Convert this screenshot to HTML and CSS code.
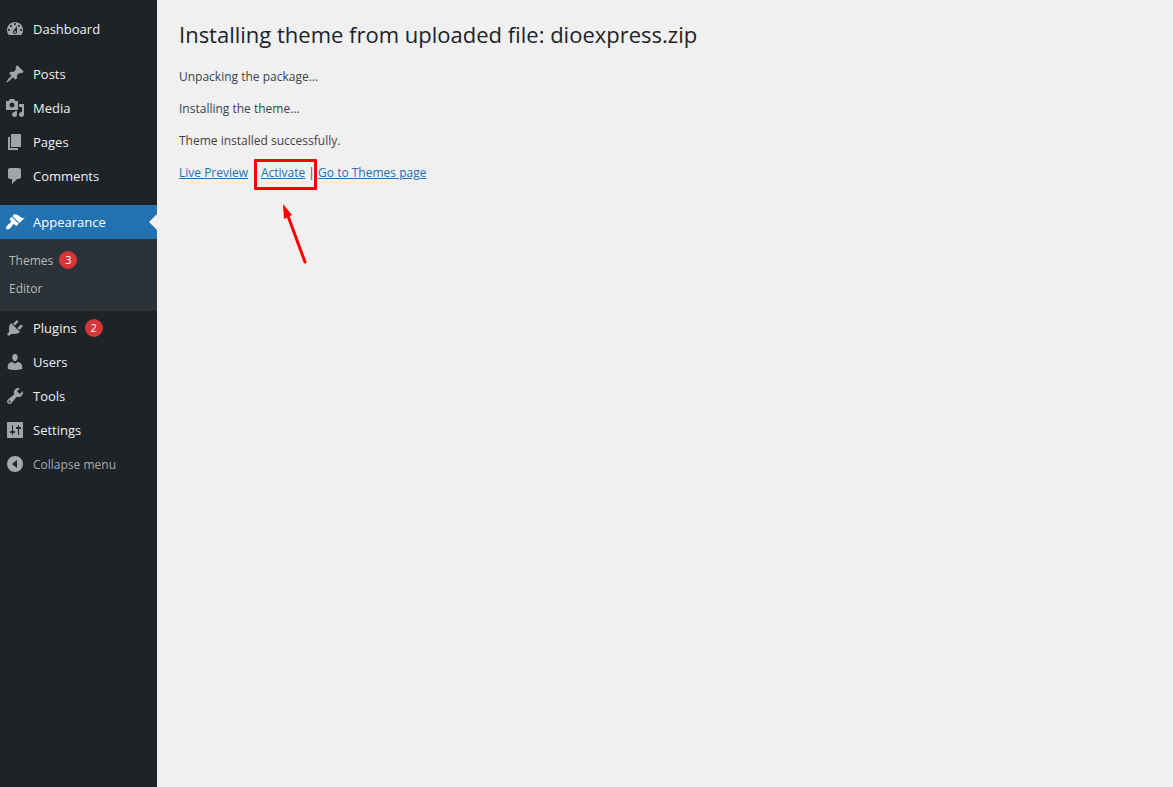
FILE: index.html
```html
<!DOCTYPE html>
<html lang="en">
<head>
<meta charset="utf-8">
<meta name="viewport" content="width=device-width, initial-scale=1">
<title>Installing theme</title>
<link rel="stylesheet" href="styles.css">
</head>
<body>
<div class="layout">
  <nav class="sidebar" aria-label="Main menu">
    <ul class="menu">
      <li><a class="menu-link" href="#"><svg class="icon" viewBox="0 0 20 20" aria-hidden="true"><path fill-rule="evenodd" d="M3.76 16h12.48c1.1-1.37 1.76-3.11 1.76-5 0-4.42-3.58-8-8-8s-8 3.58-8 8c0 1.89.66 3.63 1.76 5zM10 4c.55 0 1 .45 1 1s-.45 1-1 1-1-.45-1-1 .45-1 1-1zM6 6c.55 0 1 .45 1 1s-.45 1-1 1-1-.45-1-1 .45-1 1-1zm8 0c.55 0 1 .45 1 1s-.45 1-1 1-1-.45-1-1 .45-1 1-1zm-5.37 5.55L12 7v6c0 1.1-.9 2-2 2s-2-.9-2-2c0-.57.24-1.08.63-1.45zM4 10c.55 0 1 .45 1 1s-.45 1-1 1-1-.45-1-1 .45-1 1-1zm12 0c.55 0 1 .45 1 1s-.45 1-1 1-1-.45-1-1 .45-1 1-1zm-5 3c0-.55-.45-1-1-1s-1 .45-1 1 .45 1 1 1 1-.45 1-1z"/></svg>Dashboard</a></li>
      <li class="group-start"><a class="menu-link" href="#"><svg class="icon" viewBox="0 0 20 20" aria-hidden="true"><path d="M10.44 3.02l1.82-1.82 6.36 6.35-1.83 1.82c-1.05-.68-2.48-.57-3.41.36l-.75.75c-.92.93-1.04 2.35-.35 3.41l-1.83 1.82-2.41-2.41-2.8 2.79c-.42.42-3.38 2.71-3.8 2.29s1.86-3.39 2.28-3.81l2.79-2.79L4.1 9.36l1.83-1.82c1.05.69 2.48.57 3.4-.36l.75-.75c.93-.92 1.05-2.35.36-3.41z"/></svg>Posts</a></li>
      <li><a class="menu-link" href="#"><svg class="icon" viewBox="0 0 20 20" aria-hidden="true"><path fill-rule="evenodd" d="M13 11V4c0-.55-.45-1-1-1h-1.67L9 1H5L3.67 3H2c-.55 0-1 .45-1 1v7c0 .55.45 1 1 1h10c.55 0 1-.45 1-1zM7 4.500c1.380 0 2.500 1.120 2.500 2.500S8.380 9.500 7 9.500 4.500 8.380 4.500 7 5.620 4.500 7 4.500zM14 6h5v10.500c0 1.380-1.120 2.500-2.500 2.500S14 17.880 14 16.500s1.120-2.500 2.500-2.500c.17 0 .34.02.5.05V9h-3V6zm-4 8.050V13h2v3.500c0 1.380-1.120 2.500-2.500 2.500S7 17.880 7 16.500 8.120 14 9.500 14c.17 0 .34.02.5.05z"/></svg>Media</a></li>
      <li><a class="menu-link" href="#"><svg class="icon" viewBox="0 0 20 20" aria-hidden="true"><path d="M6 15V2h10v13H6zm-1 1h8v2H3V5h2v11z"/></svg>Pages</a></li>
      <li><a class="menu-link" href="#"><svg class="icon" viewBox="0 0 20 20" aria-hidden="true"><path d="M5 2h9c1.100 0 2 .9 2 2v7c0 1.100-.9 2-2 2h-2l-5 5v-5H5c-1.100 0-2-.9-2-2V4c0-1.100.9-2 2-2z"/></svg>Comments</a></li>
      <li class="group-start-current">
        <a class="menu-link current" href="#" aria-current="true"><svg class="icon" viewBox="0 0 20 20" aria-hidden="true"><path d="M14.480 11.060L7.410 3.990l1.500-1.500c.5-.56 2.300-.47 3.510.32 1.210.8 1.430 1.280 2.910 2.100 1.180.64 2.450 1.260 4.450.85zm-.71.71L6.700 4.700 4.930 6.470c-.39.39-.39 1.020 0 1.410l1.060 1.060c.39.39.39 1.030 0 1.420-.6.6-1.430 1.110-2.210 1.690-.35.26-.7.53-1.010.84C1.430 14.230.4 16.080 1.400 17.070c.99 1 2.840-.03 4.180-1.360.31-.31.58-.66.85-1.020.57-.78 1.080-1.610 1.690-2.210.39-.39 1.020-.39 1.410 0l1.060 1.060c.39.39 1.020.39 1.410 0z"/></svg>Appearance</a>
        <ul class="submenu">
          <li><a class="submenu-link" href="#">Themes <span class="count">3</span></a></li>
          <li><a class="submenu-link" href="#">Editor</a></li>
        </ul>
      </li>
      <li><a class="menu-link" href="#"><svg class="icon" viewBox="0 0 20 20" aria-hidden="true"><path d="M13.110 4.360L9.870 7.600 8 5.730l3.240-3.240c.35-.34 1.050-.2 1.560.32.52.51.66 1.210.31 1.550zm-8 1.770l.91-1.120 9.010 9.010-1.190.84c-.71.71-2.630 1.160-3.820 1.160H6.140L4.900 17.260c-.59.59-1.540.59-2.120 0-.59-.58-.59-1.530 0-2.120l1.240-1.240v-3.880c0-1.130.4-3.190 1.090-3.890zm7.260 3.970l3.240-3.240c.34-.35 1.040-.21 1.550.31.52.51.66 1.210.31 1.550l-3.240 3.250z"/></svg>Plugins <span class="count">2</span></a></li>
      <li><a class="menu-link" href="#"><svg class="icon" viewBox="0 0 20 20" aria-hidden="true"><path d="M10 9.250c-2.270 0-2.730-3.440-2.730-3.440C7 4.020 7.820 2 9.970 2c2.160 0 2.980 2.020 2.710 3.810 0 0-.41 3.440-2.680 3.440zm0 2.570L12.720 10c2.390 0 4.520 2.330 4.520 4.530v2.490s-3.650 1.130-7.240 1.130c-3.650 0-7.240-1.130-7.240-1.130v-2.490c0-2.250 1.940-4.480 4.470-4.480z"/></svg>Users</a></li>
      <li><a class="menu-link" href="#"><svg class="icon" viewBox="0 0 20 20" aria-hidden="true"><path fill-rule="evenodd" d="M16.680 9.770c-1.340 1.340-3.300 1.670-4.950.99l-5.410 6.520c-.99.99-2.590.99-3.580 0s-.99-2.590 0-3.570l6.520-5.420c-.68-1.650-.35-3.610.99-4.950 1.280-1.280 3.120-1.620 4.720-1.060l-2.890 2.890 2.820 2.820 2.860-2.870c.53 1.580.18 3.390-1.080 4.650zM3.810 16.210c.4.39 1.040.39 1.430 0 .4-.4.4-1.040 0-1.430-.39-.4-1.030-.4-1.430 0-.39.39-.39 1.030 0 1.430z"/></svg>Tools</a></li>
      <li><a class="menu-link" href="#"><svg class="icon" viewBox="0 0 20 20" aria-hidden="true"><path fill-rule="evenodd" d="M18 17V3c0-.55-.45-1-1-1H3c-.55 0-1 .45-1 1v14c0 .55.45 1 1 1h14c.55 0 1-.45 1-1zM8 11h1c.55 0 1 .45 1 1s-.45 1-1 1H8v1.500c0 .28-.22.5-.5.5s-.5-.22-.5-.5V13H6c-.55 0-1-.45-1-1s.45-1 1-1h1V5.500c0-.28.22-.5.5-.5s.5.22.5.5V11zm5-2h-1c-.55 0-1-.45-1-1s.45-1 1-1h1V5.500c0-.28.22-.5.5-.5s.5.22.5.5V7h1c.55 0 1 .45 1 1s-.45 1-1 1h-1v5.500c0 .28-.22.5-.5.5s-.5-.22-.5-.5V9z"/></svg>Settings</a></li>
      <li><button class="menu-link collapse" type="button"><svg class="icon" viewBox="0 0 20 20" aria-hidden="true"><path fill-rule="evenodd" d="M10 2a8 8 0 1 1 0 16 8 8 0 0 1 0-16zM12 6l-5 4 5 4z"/></svg>Collapse menu</button></li>
    </ul>
  </nav>
  <main class="content">
    <h1 class="title">Installing theme from uploaded file: dioexpress.zip</h1>
    <p class="message">Unpacking the package…</p>
    <p class="message">Installing the theme…</p>
    <p class="message">Theme installed successfully.</p>
    <p class="message"><a href="#">Live Preview</a> | <span class="callout"><a href="#">Activate</a> |<svg class="pointer" viewBox="0 0 26 62" aria-hidden="true"><path d="M6 13L23 59" stroke="#f00" stroke-width="3" stroke-linecap="round"/><path d="M1 1L10 12L2 16z" fill="#f00"/></svg></span> <a href="#">Go to Themes page</a></p>
  </main>
</div>
</body>
</html>
```
FILE: styles.css
```css
* {
  box-sizing: border-box;
}

body {
  margin: 0;
  background: #f0f0f0;
  color: #3c434a;
  font-family: "Segoe UI", "Open Sans", "Noto Sans", sans-serif;
  font-size: 12px;
}

.layout {
  display: flex;
  min-height: 100vh;
}

.sidebar {
  flex: 0 0 157px;
  padding-top: 12px;
  background: #1d2327;
}

.menu,
.submenu {
  margin: 0;
  padding: 0;
  list-style: none;
}

.group-start {
  margin-top: 11px;
}

.group-start-current {
  margin-top: 12px;
}

.menu-link {
  display: flex;
  align-items: center;
  gap: 8px;
  width: 100%;
  height: 34px;
  padding: 0 5px;
  color: #f0f0f1;
  font-size: 13px;
  text-decoration: none;
}

.icon {
  flex: none;
  width: 20px;
  height: 20px;
  fill: #a0a5aa;
}

.current {
  position: relative;
  background: #2271b1;
  color: #fff;
}

.current .icon {
  fill: #fff;
}

.current::after {
  content: "";
  position: absolute;
  top: 9px;
  right: 0;
  border: 8px solid transparent;
  border-left-width: 0;
  border-right-color: #f0f0f0;
}

.submenu {
  padding: 7px 0 9px;
  background: #2c3338;
}

.submenu-link {
  display: flex;
  align-items: center;
  gap: 6px;
  height: 28px;
  padding: 0 9px;
  color: #b5b9bd;
  text-decoration: none;
}

.count {
  width: 18px;
  height: 18px;
  border-radius: 9px;
  background: #d63638;
  color: #fff;
  font-size: 11px;
  line-height: 18px;
  text-align: center;
}

.collapse {
  border: 0;
  background: none;
  color: #a7aaad;
  font-family: inherit;
  font-size: 12px;
  text-align: left;
}

.collapse .icon {
  fill: #a7aaad;
}

.content {
  flex: 1;
  min-width: 0;
  padding: 19px 22px;
}

.title {
  margin: 0 0 18px;
  color: #1d2327;
  font-size: 22px;
  font-weight: 400;
  line-height: 30px;
}

.message {
  margin: 0 0 12px;
  line-height: 20px;
}

.message a {
  color: #2271b1;
}

.callout {
  position: relative;
}

.callout::after {
  content: "";
  position: absolute;
  inset: -5px -2px -9px -7px;
  border: 3px solid #f00;
  border-radius: 1px;
  pointer-events: none;
}

.pointer {
  position: absolute;
  top: 39px;
  left: 21px;
  width: 26px;
  height: 62px;
  fill: none;
}
```
